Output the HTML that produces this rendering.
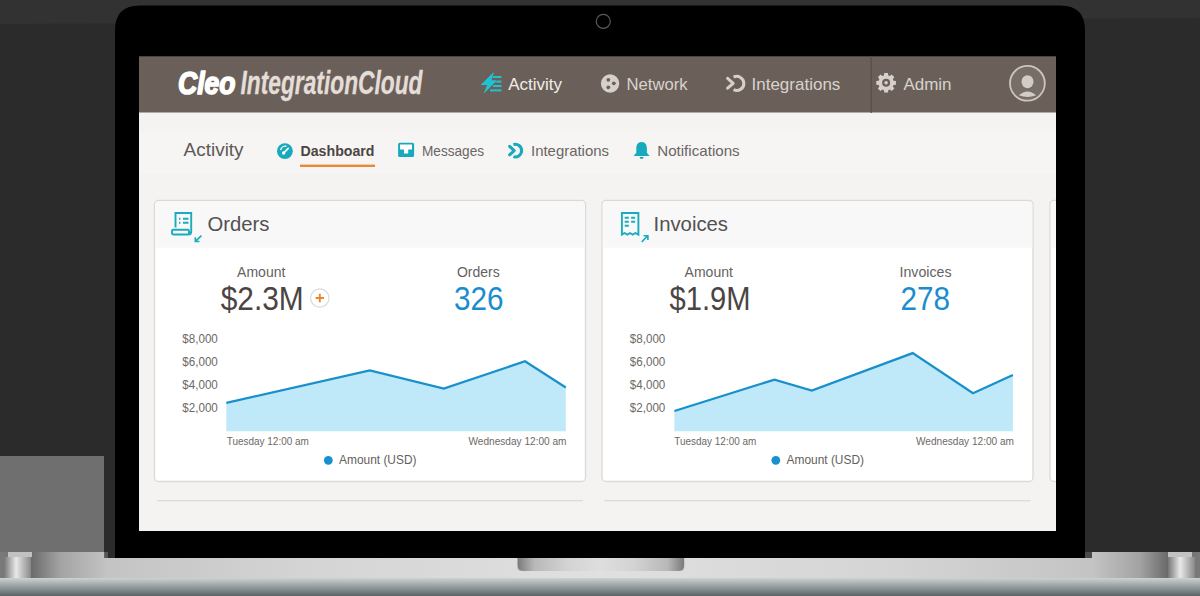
<!DOCTYPE html>
<html><head><meta charset="utf-8"><style>
*{margin:0;padding:0}
html,body{width:1200px;height:596px;overflow:hidden;background:#2d2d2d;font-family:"Liberation Sans",sans-serif}
</style></head><body>
<svg width="1200" height="596" viewBox="0 0 1200 596" style="position:absolute;left:0;top:0;font-family:'Liberation Sans',sans-serif">
<defs>
<linearGradient id="b1" x1="0" x2="1200" y1="0" y2="0" gradientUnits="userSpaceOnUse">
<stop offset="0" stop-color="#7a7a7a"/><stop offset="0.026" stop-color="#6a6a6a"/><stop offset="0.05" stop-color="#a3a3a3"/><stop offset="0.09" stop-color="#c4c4c4"/>
<stop offset="0.25" stop-color="#d4d4d4"/><stop offset="0.5" stop-color="#e0e0e0"/><stop offset="0.75" stop-color="#d4d4d4"/>
<stop offset="0.91" stop-color="#c4c4c4"/><stop offset="0.95" stop-color="#a3a3a3"/><stop offset="0.973" stop-color="#6a6a6a"/><stop offset="1" stop-color="#7a7a7a"/>
</linearGradient>
<linearGradient id="b2" x1="0" x2="0" y1="0" y2="1">
<stop offset="0" stop-color="#cdd2d2"/><stop offset="0.3" stop-color="#aab1b2"/><stop offset="0.7" stop-color="#7d8587"/><stop offset="1" stop-color="#5b6366"/>
</linearGradient>
<linearGradient id="hinge" x1="0" x2="1" y1="0" y2="0">
<stop offset="0" stop-color="#777"/><stop offset="0.45" stop-color="#e8e8e8"/><stop offset="1" stop-color="#888"/>
</linearGradient>
<linearGradient id="notch" x1="0" x2="1" y1="0" y2="0">
<stop offset="0" stop-color="#7a7a7a"/><stop offset="0.1" stop-color="#b8b8b8"/><stop offset="0.3" stop-color="#d3d3d3"/><stop offset="0.5" stop-color="#dedede"/><stop offset="0.7" stop-color="#d3d3d3"/><stop offset="0.9" stop-color="#b8b8b8"/><stop offset="1" stop-color="#7a7a7a"/>
</linearGradient>
<clipPath id="scr"><rect x="139" y="56" width="917" height="475"/></clipPath>
</defs>
<rect width="1200" height="596" fill="#2b2b2b"/>
<path d="M0,0 H1200 V18 L0,24Z" fill="#323232"/>
<rect x="0" y="456" width="104" height="96" fill="#6f6f6f"/>
<path d="M115,558 V30.5 Q115,5.5 140,5.5 H1060 Q1085,5.5 1085,30.5 V558Z" fill="#000"/>
<circle cx="603.3" cy="21.3" r="7" fill="none" stroke="#5a5a5a" stroke-width="1.2"/>
<rect x="0" y="552" width="104.5" height="26" fill="url(#b1)"/><rect x="104.5" y="552" width="3.5" height="6" fill="#555"/>
<rect x="1092" y="552" width="108" height="26" fill="url(#b1)"/>
<rect x="0" y="558" width="1200" height="20" fill="url(#b1)"/>
<rect x="4" y="557" width="27" height="21" fill="url(#hinge)"/><rect x="8" y="552" width="24" height="5" fill="#c2c2c2"/>
<rect x="1168" y="557" width="27" height="21" fill="url(#hinge)"/><rect x="1168" y="552" width="24" height="5" fill="#c2c2c2"/><rect x="1085" y="552" width="7" height="6" fill="#4a4a4a"/>
<rect x="0" y="578" width="1200" height="18" fill="url(#b2)"/>
<path d="M517.5,558 H684.2 V565 Q684.2,571 678.2,571 H523.5 Q517.5,571 517.5,565Z" fill="url(#notch)"/><path d="M517.5,565 Q517.5,571 523.5,571 H678.2 Q684.2,571 684.2,565 V568 Q684.2,571 680,571 H522 Q517.5,571 517.5,568Z" fill="#888" opacity="0.5"/>
<!-- screen -->
<rect x="139" y="110" width="917" height="421" fill="#f4f3f1"/><rect x="139" y="132" width="917" height="42" fill="#f6f5f4"/>
<rect x="139" y="56.3" width="917" height="56.2" fill="#6a6059"/>
<rect x="870.6" y="56" width="1.2" height="57" fill="#574f49"/>

<text x="178" y="94.3" font-size="32" fill="#ffffff" font-weight="bold" font-style="italic" textLength="57.5" lengthAdjust="spacingAndGlyphs" stroke="#fff" stroke-width="1.7" stroke-linejoin="round">Cleo</text>
<text x="240.5" y="94.2" font-size="32.5" fill="#e4ddd8" font-weight="bold" font-style="italic" textLength="182" lengthAdjust="spacingAndGlyphs" stroke="#e4ddd8" stroke-width="0.3">IntegrationCloud</text>
<g fill="#20c2d2">
<rect x="491.5" y="76" width="10" height="2"/><rect x="494" y="80.6" width="7.5" height="2"/><rect x="493" y="85" width="8.5" height="2"/><rect x="490" y="89.4" width="11.5" height="2"/>
<path d="M493.8,72.3 L480.8,85 H487.3 L483.8,93.6 L496.5,80.5 H491.3 Z" stroke="#6a6059" stroke-width="1.1" stroke-linejoin="round" paint-order="stroke"/>
<path d="M493.8,72.3 L480.8,85 H487.3 L483.8,93.6 L496.5,80.5 H491.3 Z"/>
</g>
<circle cx="610.1" cy="83.5" r="9.2" fill="#d6cfca"/>
<circle cx="608.3" cy="79.8" r="1.9" fill="#6a615a"/><circle cx="613.8" cy="83.3" r="1.9" fill="#6a615a"/><circle cx="608.3" cy="87.3" r="1.9" fill="#6a615a"/>
<g fill="none" stroke="#d6cfca" stroke-width="3" stroke-linecap="round">
<path d="M727.6,78.3 L733.2,83.3 L727.6,88.2" stroke-linejoin="round"/>
<path d="M733.6,77.2 A7,7 0 1 1 733.6,89.6" stroke-linecap="butt"/>
</g>
<path d="M883.95,75.41 L884.23,72.98 L887.97,72.98 L888.25,75.41 L889.81,76.05 L891.72,74.53 L894.37,77.18 L892.85,79.09 L893.49,80.65 L895.92,80.93 L895.92,84.67 L893.49,84.95 L892.85,86.51 L894.37,88.42 L891.72,91.07 L889.81,89.55 L888.25,90.19 L887.97,92.62 L884.23,92.62 L883.95,90.19 L882.39,89.55 L880.48,91.07 L877.83,88.42 L879.35,86.51 L878.71,84.95 L876.28,84.67 L876.28,80.93 L878.71,80.65 L879.35,79.09 L877.83,77.18 L880.48,74.53 L882.39,76.05Z" fill="#d6cfca"/><circle cx="886.1" cy="82.8" r="4" fill="#6a6059"/><circle cx="886.1" cy="82.8" r="1.8" fill="#d6cfca"/>
<circle cx="1027.4" cy="83.3" r="17.4" fill="#776e68" stroke="#cdc4bd" stroke-width="1.8"/>
<ellipse cx="1027.5" cy="81.7" rx="6" ry="6.5" fill="#d2cbc6"/>
<path d="M1018.8,95.3 Q1027.5,87.6 1036.2,95.3 Q1027.5,98.8 1018.8,95.3Z" fill="#d2cbc6"/>
<text x="508.2" y="89.7" font-size="17" fill="#f1ede9" font-weight="normal" font-style="normal" >Activity</text>
<text x="626.6" y="89.7" font-size="17" fill="#d9d2cd" font-weight="normal" font-style="normal" textLength="61" lengthAdjust="spacingAndGlyphs" >Network</text>
<text x="751.5" y="89.7" font-size="17" fill="#d9d2cd" font-weight="normal" font-style="normal" >Integrations</text>
<text x="903.4" y="89.7" font-size="17" fill="#d9d2cd" font-weight="normal" font-style="normal" >Admin</text>
<text x="183.6" y="155.5" font-size="18" fill="#5e5955" font-weight="normal" font-style="normal" textLength="60" lengthAdjust="spacingAndGlyphs" >Activity</text>
<circle cx="284.9" cy="151.2" r="7.9" fill="#17a9bd"/>
<path d="M280.6,150.2 A5,5 0 0 1 286.4,146.3" fill="none" stroke="#fff" stroke-width="1.4"/>
<path d="M283.8,152.8 L288.2,148.3" stroke="#fff" stroke-width="1.7" stroke-linecap="round"/><circle cx="283.6" cy="153" r="1.7" fill="#fff"/>
<text x="300.5" y="155.5" font-size="14.3" fill="#4a4542" font-weight="bold" font-style="normal" textLength="74" lengthAdjust="spacingAndGlyphs" >Dashboard</text>
<rect x="300" y="164.6" width="75" height="2.4" fill="#e8883b"/>
<rect x="398.1" y="142.8" width="16" height="14.3" rx="1.6" fill="#17a9bd"/>
<path d="M400,144.6 H412 V149.6 H408.2 V153.6 H404 V149.6 H400Z" fill="#fff"/>
<text x="422" y="155.5" font-size="15" fill="#6b6663" font-weight="normal" font-style="normal" textLength="62" lengthAdjust="spacingAndGlyphs" >Messages</text>
<g fill="none" stroke="#17a9bd" stroke-width="3" stroke-linecap="round">
<path d="M509.6,146.3 L514.2,150.6 L509.6,154.8" stroke-linejoin="round"/>
<path d="M513.4,144.6 A6.3,6.3 0 1 1 513.4,156.6" stroke-linecap="butt"/>
</g>
<text x="531" y="155.5" font-size="15" fill="#6b6663" font-weight="normal" font-style="normal" textLength="78" lengthAdjust="spacingAndGlyphs" >Integrations</text>
<path d="M641.6,142 C637.5,142 636.3,145.3 636.3,148.5 V152.8 L633.6,156 H649.6 L646.9,152.8 V148.5 C646.9,145.3 645.7,142 641.6,142Z" fill="#17a9bd"/>
<path d="M639.6,157 A2,2 0 0 0 643.6,157Z" fill="#17a9bd"/>
<text x="657.2" y="155.5" font-size="15" fill="#6b6663" font-weight="normal" font-style="normal" textLength="82.5" lengthAdjust="spacingAndGlyphs" >Notifications</text>
<rect x="154.5" y="200.5" width="431" height="281" rx="4" fill="#fff" stroke="#d9d9d9" stroke-width="1.3"/>
<path d="M155.2,247.8 V204.5 Q155.2,201.2 158.5,201.2 H581.5 Q584.8,201.2 584.8,204.5 V247.8Z" fill="#f8f8f8"/>
<g fill="none" stroke="#19abbf" stroke-width="1.9">
<path d="M175.5,227.5 V213 H191.2 V231.5 Q191.2,234.5 188.5,234.5"/>
<rect x="172" y="229.8" width="17" height="4.7" rx="1.2"/>
<path d="M183,218.8 H188.5 M183,222.8 H188.5 M179,218.8 H180.4 M179,222.8 H180.4"/>
<path d="M201.4,235.6 L195.6,241.2 M195.3,237.3 V241.5 H199.5" stroke-width="1.6"/>
</g>
<text x="207.5" y="231.1" font-size="21" fill="#545050" font-weight="normal" font-style="normal" textLength="62" lengthAdjust="spacingAndGlyphs" >Orders</text>
<text x="237.1" y="276.9" font-size="14" fill="#666260" font-weight="normal" font-style="normal" >Amount</text>
<text x="220.7" y="309.5" font-size="33" fill="#4a4543" font-weight="normal" font-style="normal" textLength="83" lengthAdjust="spacingAndGlyphs" >$2.3M</text>
<text x="456.9" y="276.9" font-size="14" fill="#666260" font-weight="normal" font-style="normal" >Orders</text>
<text x="453.9" y="309.8" font-size="33" fill="#1b8dcf" font-weight="normal" font-style="normal" textLength="49.5" lengthAdjust="spacingAndGlyphs" >326</text>
<text x="217.8" y="342.5" font-size="12.5" fill="#6d6966" font-weight="normal" font-style="normal" textLength="35.5" lengthAdjust="spacingAndGlyphs" text-anchor="end">$8,000</text>
<text x="217.8" y="365.8" font-size="12.5" fill="#6d6966" font-weight="normal" font-style="normal" textLength="35.5" lengthAdjust="spacingAndGlyphs" text-anchor="end">$6,000</text>
<text x="217.8" y="389.3" font-size="12.5" fill="#6d6966" font-weight="normal" font-style="normal" textLength="35.5" lengthAdjust="spacingAndGlyphs" text-anchor="end">$4,000</text>
<text x="217.8" y="412.2" font-size="12.5" fill="#6d6966" font-weight="normal" font-style="normal" textLength="35.5" lengthAdjust="spacingAndGlyphs" text-anchor="end">$2,000</text>
<path d="M226.3,431.3 L226.3,402.9 369.8,370.4 443.8,388.5 525.0,361.3 565.8,387.5 L565.8,431.3Z" fill="#bfe8f9"/>
<polyline points="226.3,402.9 369.8,370.4 443.8,388.5 525.0,361.3 565.8,387.5" fill="none" stroke="#1890cb" stroke-width="2.2" stroke-linejoin="miter"/>
<text x="226.8" y="445.3" font-size="11" fill="#6d6966" font-weight="normal" font-style="normal" textLength="82" lengthAdjust="spacingAndGlyphs" >Tuesday 12:00 am</text>
<text x="468.5" y="445.3" font-size="11" fill="#6d6966" font-weight="normal" font-style="normal" textLength="98" lengthAdjust="spacingAndGlyphs" >Wednesday 12:00 am</text>
<circle cx="328.3" cy="460.3" r="4.4" fill="#1590d0"/>
<text x="339.0" y="464" font-size="12.5" fill="#63605d" font-weight="normal" font-style="normal" textLength="77.5" lengthAdjust="spacingAndGlyphs" >Amount (USD)</text>
<circle cx="319.8" cy="298" r="9.2" fill="#fff" stroke="#dedcda" stroke-width="1.2"/>
<path d="M319.8,293.8 V302.2 M315.6,298 H324" stroke="#e9862f" stroke-width="1.9"/>
<rect x="602.0" y="200.5" width="431" height="281" rx="4" fill="#fff" stroke="#d9d9d9" stroke-width="1.3"/>
<path d="M602.7,247.8 V204.5 Q602.7,201.2 606.0,201.2 H1029.0 Q1032.3,201.2 1032.3,204.5 V247.8Z" fill="#f8f8f8"/>
<g fill="none" stroke="#19abbf" stroke-width="1.9">
<path d="M638.4,231.5 V213 H621.9 V234.6 L624.6,233 L627.3,234.6 L630,233 L632.7,234.6 L635.4,233 L638.4,234.6 Z" />
<path d="M624.7,217.7 H628.8 M631.1,217.7 H635.1 M624.7,221.8 H628.8 M631.1,221.8 H635.1 M624.7,225.8 H628.8"/>
<path d="M641.7,241.9 L647.6,236 M643.6,235.7 H647.9 V240" stroke-width="1.6"/>
</g>
<text x="653.5" y="231.1" font-size="21" fill="#545050" font-weight="normal" font-style="normal" textLength="74.5" lengthAdjust="spacingAndGlyphs" >Invoices</text>
<text x="684.6" y="276.9" font-size="14" fill="#666260" font-weight="normal" font-style="normal" >Amount</text>
<text x="669.5" y="309.5" font-size="33" fill="#4a4543" font-weight="normal" font-style="normal" textLength="81" lengthAdjust="spacingAndGlyphs" >$1.9M</text>
<text x="899.5" y="276.9" font-size="14" fill="#666260" font-weight="normal" font-style="normal" textLength="52" lengthAdjust="spacingAndGlyphs" >Invoices</text>
<text x="900.6" y="309.8" font-size="33" fill="#1b8dcf" font-weight="normal" font-style="normal" textLength="49.5" lengthAdjust="spacingAndGlyphs" >278</text>
<text x="665.3" y="342.5" font-size="12.5" fill="#6d6966" font-weight="normal" font-style="normal" textLength="35.5" lengthAdjust="spacingAndGlyphs" text-anchor="end">$8,000</text>
<text x="665.3" y="365.8" font-size="12.5" fill="#6d6966" font-weight="normal" font-style="normal" textLength="35.5" lengthAdjust="spacingAndGlyphs" text-anchor="end">$6,000</text>
<text x="665.3" y="389.3" font-size="12.5" fill="#6d6966" font-weight="normal" font-style="normal" textLength="35.5" lengthAdjust="spacingAndGlyphs" text-anchor="end">$4,000</text>
<text x="665.3" y="412.2" font-size="12.5" fill="#6d6966" font-weight="normal" font-style="normal" textLength="35.5" lengthAdjust="spacingAndGlyphs" text-anchor="end">$2,000</text>
<path d="M674.4,431.3 L674.4,411.0 774.5,379.6 811.8,390.6 912.7,353.1 973.0,393.2 1012.9,375.0 L1012.9,431.3Z" fill="#bfe8f9"/>
<polyline points="674.4,411.0 774.5,379.6 811.8,390.6 912.7,353.1 973.0,393.2 1012.9,375.0" fill="none" stroke="#1890cb" stroke-width="2.2" stroke-linejoin="miter"/>
<text x="674.3" y="445.3" font-size="11" fill="#6d6966" font-weight="normal" font-style="normal" textLength="82" lengthAdjust="spacingAndGlyphs" >Tuesday 12:00 am</text>
<text x="916.0" y="445.3" font-size="11" fill="#6d6966" font-weight="normal" font-style="normal" textLength="98" lengthAdjust="spacingAndGlyphs" >Wednesday 12:00 am</text>
<circle cx="775.8" cy="460.3" r="4.4" fill="#1590d0"/>
<text x="786.5" y="464" font-size="12.5" fill="#63605d" font-weight="normal" font-style="normal" textLength="77.5" lengthAdjust="spacingAndGlyphs" >Amount (USD)</text>
<rect x="1050" y="200.5" width="40" height="281" clip-path="url(#scr)" rx="4" fill="#fff" stroke="#d9d9d9" stroke-width="1.3"/><path d="M1050.7,247.8 V204.5 Q1050.7,201.2 1054,201.2 H1060 V247.8Z" fill="#f8f8f8"/>
<rect x="157" y="500" width="426" height="1.4" fill="#dcdcdc"/><rect x="604.5" y="500" width="426" height="1.4" fill="#dcdcdc"/>
<rect x="1056" y="56" width="29" height="480" fill="#000"/>
</svg>
</body></html>
